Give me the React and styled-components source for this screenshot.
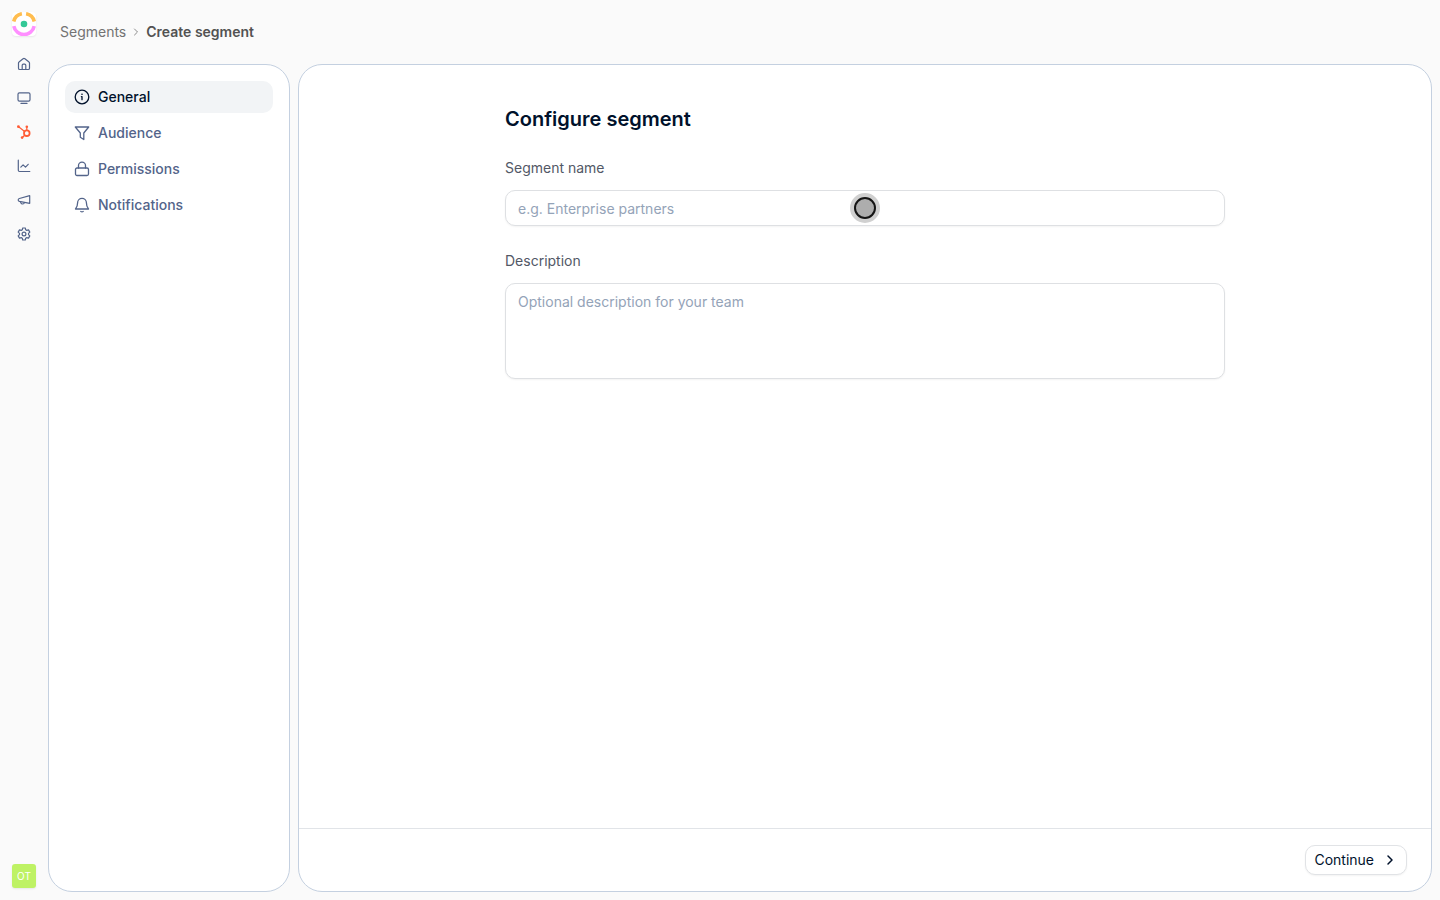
import React, { useState } from "react";
import styled, { createGlobalStyle } from "styled-components";

const GlobalStyle = createGlobalStyle`
  *, *::before, *::after {
    box-sizing: border-box;
  }

  body {
    margin: 0;
    background: #fafafa;
    color: #00112b;
    font-family: Inter, "Liberation Sans", sans-serif;
    font-size: 14px;
    line-height: 20px;
  }

  button, input, textarea {
    font: inherit;
  }
`;

const Page = styled.div`
  display: flex;
  min-height: 100vh;
`;

const Rail = styled.nav`
  width: 48px;
  flex-shrink: 0;
  display: flex;
  flex-direction: column;
  align-items: center;
  padding: 12px 0;
`;

const LogoLink = styled.a`
  display: flex;
  width: 24px;
  height: 24px;
  margin-bottom: 16px;
  overflow: hidden;
  border-radius: 4px;
  background: white;
  box-shadow: 0 1px 2px rgba(0, 0, 0, 0.08);
`;

const RailList = styled.div`
  display: flex;
  flex-direction: column;
  gap: 10px;
`;

const RailLink = styled.a`
  display: flex;
  align-items: center;
  justify-content: center;
  width: 24px;
  height: 24px;
  color: ${(props) => props.$color || "#53648a"};
`;

const Avatar = styled.button`
  width: 24px;
  height: 24px;
  margin-top: auto;
  padding: 0;
  border: none;
  border-radius: 3px;
  background: #bef264;
  box-shadow: 0 1px 2px rgba(0, 0, 0, 0.08);
  color: white;
  font-size: 10px;
  line-height: 24px;
`;

const Content = styled.div`
  flex: 1;
  min-width: 0;
  display: flex;
  flex-direction: column;
  padding: 0 8px 8px 0;
`;

const Breadcrumbs = styled.header`
  display: flex;
  align-items: center;
  gap: 6px;
  height: 64px;
  padding: 0 12px;
  color: #8a8a8a;

  a {
    color: #737373;
    text-decoration: none;
  }

  strong {
    color: #525252;
    font-weight: 600;
  }
`;

const Panels = styled.div`
  flex: 1;
  display: flex;
  gap: 8px;
`;

const Panel = styled.div`
  border: 1px solid #c4d0e0;
  border-radius: 24px;
  background: white;
`;

const Steps = styled(Panel)`
  width: 242px;
  flex-shrink: 0;
  display: flex;
  flex-direction: column;
  gap: 4px;
  padding: 16px;
`;

const Step = styled.button`
  display: flex;
  align-items: center;
  gap: 8px;
  height: 32px;
  padding: 0 9px;
  border: none;
  border-radius: 10px;
  background: ${(props) => (props.$active ? "#f2f4f6" : "transparent")};
  color: ${(props) => (props.$active ? "#00112b" : "#53648a")};
  font-weight: 500;
  text-align: left;
  cursor: pointer;
`;

const Main = styled(Panel)`
  flex: 1;
  min-width: 0;
  display: flex;
  flex-direction: column;
`;

const Form = styled.form`
  flex: 1;
  width: 100%;
  max-width: 768px;
  margin: 0 auto;
  padding: 40px 24px;
`;

const Title = styled.h1`
  margin: 0 0 24px;
  font-size: 20px;
  font-weight: 600;
  line-height: 28px;
`;

const Field = styled.div`
  display: flex;
  flex-direction: column;
  gap: 11px;
  margin-bottom: 24px;

  label {
    color: #525866;
    line-height: 22px;
  }

  input,
  textarea {
    display: block;
    width: 100%;
    margin: 0;
    padding: 8px 12px;
    border: 1px solid #dee0e3;
    border-radius: 10px;
    background: white;
    box-shadow: 0 1px 2px rgba(0, 0, 0, 0.05);
    color: #00112b;
    outline: none;
    resize: none;
  }

  input {
    height: 36px;
  }

  textarea {
    height: 96px;
  }

  ::placeholder {
    color: #94a3b8;
    opacity: 1;
  }
`;

const InputWrap = styled.div`
  position: relative;
`;

const Pointer = styled.span`
  position: absolute;
  inset: 0;
  width: 30px;
  height: 30px;
  margin: auto;
  border: 4px solid #d0d0d0;
  border-radius: 50%;
  background: #d0d0d0;
  pointer-events: none;

  &::before {
    content: "";
    display: block;
    height: 100%;
    border: 2px solid #151515;
    border-radius: 50%;
    background: #adadad;
  }
`;

const Footer = styled.footer`
  display: flex;
  justify-content: flex-end;
  padding: 16px 24px;
  border-top: 1px solid #e1e4e8;
`;

const ContinueButton = styled.button`
  display: flex;
  align-items: center;
  gap: 8px;
  height: 30px;
  padding: 0 8px;
  border: 1px solid #e1e3e6;
  border-radius: 10px;
  background: white;
  box-shadow: 0 1px 2px rgba(0, 0, 0, 0.05);
  color: #00112b;
  cursor: pointer;
`;

const Icon = ({ size = 16, stroke = 1.3, children }) => (
  <svg
    width={size}
    height={size}
    viewBox={`0 0 ${size} ${size}`}
    fill="none"
    stroke="currentColor"
    strokeWidth={stroke}
    strokeLinecap="round"
    strokeLinejoin="round"
    aria-hidden="true"
  >
    {children}
  </svg>
);

const Logo = () => (
  <svg width="24" height="24" viewBox="0 0 24 24" fill="none" aria-hidden="true">
    <path d="M1.7 9.5A10.4 10.4 0 0 1 9.9 1.7" stroke="#ffbd4f" strokeWidth="3.6" />
    <path d="M14.1 1.7A10.4 10.4 0 0 1 22.3 9.5" stroke="#ffbd4f" strokeWidth="3.6" />
    <path d="M1.8 14.2A10.4 10.4 0 0 0 22.2 14.2" stroke="#ff8fff" strokeWidth="3.6" />
    <circle cx="12" cy="12" r="3.3" fill="#34c997" />
  </svg>
);

const railItems = [
  {
    label: "Home",
    icon: (
      <>
        <path d="M1.5 6.1c0-.6.3-1.1.8-1.4l3.8-3c.5-.4 1.3-.4 1.8 0l3.8 3c.5.3.8.8.8 1.4v5.1c0 .7-.6 1.3-1.3 1.3H2.8c-.7 0-1.3-.6-1.3-1.3Z" />
        <path d="M5.2 12.5V8.2c0-.6.5-1.1 1.1-1.1h1.4c.6 0 1.1.5 1.1 1.1v4.3" />
      </>
    ),
  },
  {
    label: "Portal",
    icon: (
      <>
        <rect x="1" y="1.8" width="12" height="8.4" rx="1.4" />
        <path d="M4 12.4h6" />
      </>
    ),
  },
  {
    label: "HubSpot",
    color: "#ff5c35",
    icon: (
      <>
        <circle cx="9.8" cy="8.2" r="2.8" strokeWidth="1.8" />
        <path d="M9.8 5.2V2.2M7.6 6.4 1.6 1.8M7.7 10.3 5.3 12.5" />
        <circle cx="9.8" cy="1.8" r="1.3" fill="currentColor" stroke="none" />
        <circle cx="1.4" cy="1.7" r="1.4" fill="currentColor" stroke="none" />
        <circle cx="5.1" cy="12.6" r="1.3" fill="currentColor" stroke="none" />
      </>
    ),
  },
  {
    label: "Analytics",
    icon: (
      <>
        <path d="M1.3 1.2v10.1c0 .7.5 1.2 1.2 1.2h10.3" />
        <path d="m3.8 8.2 2.3-2.3 2.4 2.2 2.7-2.8" />
      </>
    ),
  },
  {
    label: "Campaigns",
    icon: (
      <>
        <path d="M12.7 2.7v7.6L2.4 8.3c-.7-.2-1.2-.7-1.2-1.4s.5-1.2 1.2-1.4Z" />
        <path d="m3.5 8.7.3 1c.3.8 1 1.3 1.9 1.3s1.6-.6 1.7-1.5" />
      </>
    ),
  },
  {
    label: "Settings",
    icon: (
      <>
        <path d="M5.3 2.8 5.7 1h2.6l.4 1.8 1.1.6 1.7-.5 1.3 2.2-1.3 1.3v1.2l1.3 1.3-1.3 2.2-1.7-.5-1.1.6-.4 1.8H5.7l-.4-1.8-1.1-.6-1.7.5-1.3-2.2 1.3-1.3V6.4L1.2 5.1l1.3-2.2 1.7.5Z" />
        <circle cx="7" cy="7" r="1.9" />
      </>
    ),
  },
];

const steps = [
  {
    label: "General",
    icon: (
      <>
        <circle cx="8" cy="8" r="6.8" />
        <path d="M7.4 7.6H8v3.1" />
        <circle cx="8" cy="5.2" r=".8" fill="currentColor" stroke="none" />
      </>
    ),
  },
  {
    label: "Audience",
    icon: <path d="M1.3 2h13.4L9.8 8v6.5L6.3 12.3V8Z" />,
  },
  {
    label: "Permissions",
    icon: (
      <>
        <rect x="1.5" y="7" width="13" height="7.5" rx="1.5" />
        <path d="M4.5 7V4.6a3.5 3.5 0 0 1 7 0V7" />
      </>
    ),
  },
  {
    label: "Notifications",
    icon: (
      <>
        <path d="M3.6 5.8a4.4 4.4 0 0 1 8.8 0c0 3.4 1.1 5.1 2.1 6.2h-13c1-1.1 2.1-2.8 2.1-6.2Z" />
        <path d="M6.8 14.5c.7.4 1.7.4 2.4 0" />
      </>
    ),
  },
];

function App() {
  const [active, setActive] = useState("General");

  return (
    <Page>
      <GlobalStyle />
      <Rail aria-label="Main">
        <LogoLink href="#" aria-label="Dashboard">
          <Logo />
        </LogoLink>
        <RailList>
          {railItems.map((item) => (
            <RailLink key={item.label} href="#" aria-label={item.label} $color={item.color}>
              <Icon size={14} stroke={1.2}>{item.icon}</Icon>
            </RailLink>
          ))}
        </RailList>
        <Avatar type="button">OT</Avatar>
      </Rail>
      <Content>
        <Breadcrumbs>
          <a href="#">Segments</a>
          <Icon size={8} stroke={1}>
            <path d="m2.5 1 3 3-3 3" />
          </Icon>
          <strong>Create segment</strong>
        </Breadcrumbs>
        <Panels>
          <Steps as="nav" aria-label="Segment steps">
            {steps.map((step) => (
              <Step
                key={step.label}
                type="button"
                $active={active === step.label}
                onClick={() => setActive(step.label)}
              >
                <Icon>{step.icon}</Icon>
                {step.label}
              </Step>
            ))}
          </Steps>
          <Main as="main">
            <Form id="segment-form">
              <Title>Configure segment</Title>
              <Field>
                <label htmlFor="name">Segment name</label>
                <InputWrap>
                  <input id="name" type="text" placeholder="e.g. Enterprise partners" />
                  <Pointer />
                </InputWrap>
              </Field>
              <Field>
                <label htmlFor="description">Description</label>
                <textarea id="description" placeholder="Optional description for your team" />
              </Field>
            </Form>
            <Footer>
              <ContinueButton type="button">
                Continue
                <Icon stroke={1.5}>
                  <path d="m6 4 4 4-4 4" />
                </Icon>
              </ContinueButton>
            </Footer>
          </Main>
        </Panels>
      </Content>
    </Page>
  );
}

export default App;
